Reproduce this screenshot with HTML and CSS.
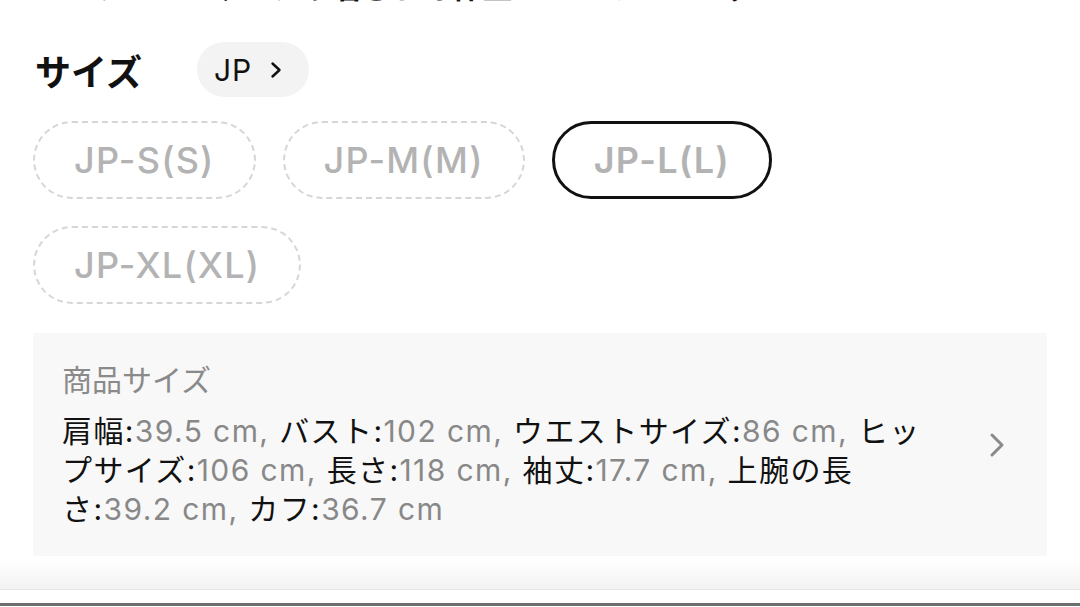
FILE: index.html
```html
<!DOCTYPE html>
<html lang="ja">
<head>
  <meta charset="UTF-8" />
  <meta name="viewport" content="width=device-width, initial-scale=1.0"/>
  <title>サイズ選択</title>
  <link rel="stylesheet" href="styles.css">
</head>
<body>
  <div class="page">
    <!-- heading scrolled mostly out of view -->
    <h2 class="cut-title">ハイライト・ゆったり着られる体型カバーのシルエット</h2>

    <div class="size-head">
      <span class="size-label">サイズ</span>
      <button class="region-pill">
        JP
        <svg width="12" height="18" viewBox="0 0 12 18"><path d="M2.5 2.5 L9.5 9 L2.5 15.5" fill="none" stroke="#111" stroke-width="2.4" stroke-linecap="round" stroke-linejoin="round"/></svg>
      </button>
    </div>

    <div class="size-options">
      <button class="size-opt">JP-S(S)</button>
      <button class="size-opt">JP-M(M)</button>
      <button class="size-opt selected">JP-L(L)</button>
      <button class="size-opt">JP-XL(XL)</button>
    </div>

    <div class="size-info">
      <div class="info-text">
        <div class="info-title">商品サイズ</div>
        <p class="info-desc">
          <span class="k">肩幅:</span><span class="v">39.5 cm, </span><span class="k">バスト:</span><span class="v">102 cm, </span><span class="k">ウエストサイズ:</span><span class="v">86 cm, </span><span class="k">ヒップサイズ:</span><span class="v">106 cm, </span><span class="k">長さ:</span><span class="v">118 cm, </span><span class="k">袖丈:</span><span class="v">17.7 cm, </span><span class="k">上腕の長さ:</span><span class="v">39.2 cm, </span><span class="k">カフ:</span><span class="v">36.7 cm</span>
        </p>
      </div>
      <svg class="info-arrow" width="16" height="26" viewBox="0 0 16 26"><path d="M3 3 L13 13 L3 23" fill="none" stroke="#8a8a8a" stroke-width="3" stroke-linecap="round" stroke-linejoin="round"/></svg>
    </div>
  </div>

  <div class="bottom-shadow"></div>
  <div class="home-strip"></div>
  <div class="bottom-edge"></div>
</body>
</html>
```

FILE: styles.css
```css
body {
  margin: 0;
  width: 1080px;
  height: 607px;
  overflow: hidden;
  background-color: #fff;
  color: #111;
  font-family: Inter, "Noto Sans CJK JP", sans-serif;
}

.page {
  padding: 0 33px;
}

.cut-title {
  margin: -33px 0 0 0;
  height: 40px;
  line-height: 40px;
  font-size: 30px;
  font-weight: 700;
  white-space: nowrap;
}

.size-head {
  display: flex;
  align-items: center;
  margin-top: 35px;
  height: 55px;
}

.size-label {
  width: 162px;
  padding-left: 2px;
  font-size: 36px;
  font-weight: 700;
}

.region-pill {
  display: flex;
  align-items: center;
  gap: 18px;
  height: 55px;
  padding: 0 27px 0 17px;
  border: none;
  border-radius: 28px;
  background-color: #f3f3f3;
  color: #111;
  font-family: inherit;
  font-size: 30px;
  letter-spacing: 1px;
}

.size-options {
  display: flex;
  flex-wrap: wrap;
  gap: 27px;
  margin-top: 24px;
}

.size-opt {
  height: 78px;
  padding: 0 39px;
  border: 2px dashed #d6d6d6;
  border-radius: 39px;
  background: #fff;
  color: #b3b3b3;
  font-family: inherit;
  font-size: 36px;
  font-weight: 500;
  letter-spacing: 1.2px;
}

.size-opt.selected {
  border: 3px solid #111;
  font-weight: 600;
}

.size-info {
  display: flex;
  align-items: center;
  gap: 49px;
  margin-top: 29px;
  padding: 28px 42px 27px 29px;
  background-color: #f8f8f8;
}

.info-text {
  flex: 1;
}

.info-title {
  color: #8a8a8a;
  font-size: 30px;
  line-height: 38px;
}

.info-desc {
  margin: 13px 0 0;
  font-size: 30px;
  line-height: 39px;
  letter-spacing: 1.4px;
}

.info-desc .k {
  color: #111;
}

.info-desc .v {
  color: #888;
}

.info-arrow {
  flex-shrink: 0;
}

.bottom-shadow {
  margin-top: 3px;
  height: 30px;
  background: linear-gradient(to bottom, rgba(0, 0, 0, 0), rgba(0, 0, 0, 0.05));
  border-bottom: 1px solid #e6e6e6;
}

.home-strip {
  height: 13px;
  background-color: #fff;
}

.bottom-edge {
  height: 3px;
  background-color: #6e6e6e;
}
```
